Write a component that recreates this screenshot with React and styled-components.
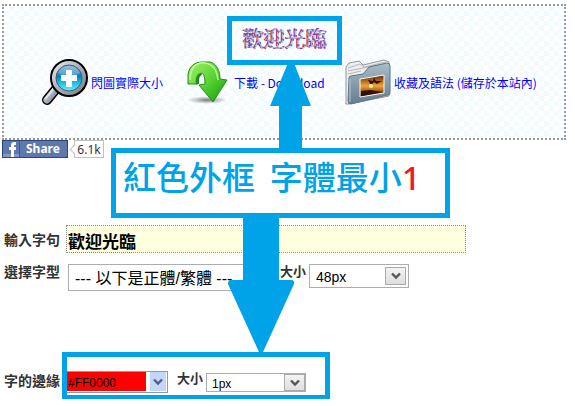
import React from 'react';
import styled, { createGlobalStyle } from 'styled-components';

const BLUE = '#00a2e8';

const GlobalStyle = createGlobalStyle`
  * { box-sizing: border-box; }
  body {
    margin: 0;
    background: #fff;
    color: #333;
    font-family: "Liberation Sans", "Noto Sans CJK TC", sans-serif;
  }
`;

const Page = styled.main`
  position: relative;
  padding: 4px 9px 6px 2px;
`;

const Preview = styled.section`
  display: flex;
  flex-direction: column;
  align-items: center;
  height: 136px;
  padding-top: 14px;
  border: 2px dotted #999;
  background: repeating-conic-gradient(#f2fbff 0 25%, #fff 0 50%) 0 0 / 10px 10px;
`;

const Sample = styled.svg`
  width: 90px;
  height: 32px;
  font: 400 21px "Noto Sans CJK TC", sans-serif;
`;

const Links = styled.nav`
  display: flex;
  align-items: center;
  align-self: stretch;
  margin-top: 6px;
  padding-left: 34px;
`;

const IconLink = styled.a`
  display: flex;
  align-items: center;
  gap: 2px;
  width: ${(p) => p.$width};
  color: #00f;
  font: 12px/18px "Noto Sans CJK TC", sans-serif;
  text-decoration: none;
  white-space: nowrap;
  svg { flex: none; }
`;

const ShareBar = styled.div`
  display: flex;
  gap: 6px;
  height: 18px;
`;

const ShareButton = styled.button`
  display: flex;
  align-items: center;
  width: 66px;
  padding: 0;
  border: 1px solid #29447e;
  background: #5f78ab;
  color: #fff;
  font: 700 12px/16px "Noto Sans", sans-serif;
  svg { flex: none; margin-right: 6px; }
`;

const Count = styled.span`
  position: relative;
  width: 30px;
  border: 1px solid #c1c1c1;
  color: #333;
  font: 12px/17px "Noto Sans", sans-serif;
  text-align: center;
  &::before {
    content: "";
    position: absolute;
    left: -4px;
    top: 5px;
    width: 6px;
    height: 6px;
    border: solid #c1c1c1;
    border-width: 0 0 1px 1px;
    background: linear-gradient(45deg, #fff 50%, transparent 50%);
    transform: rotate(45deg);
  }
`;

const Form = styled.form`
  display: flex;
  flex-direction: column;
  margin-top: 67px;
`;

const Row = styled.div`
  display: flex;
  align-items: flex-start;
  height: ${(p) => p.$height};
  margin-bottom: ${(p) => p.$after || '0'};
`;

const FieldLabel = styled.label`
  flex: none;
  width: 64px;
  padding: ${(p) => p.$top || '0'} 0 0 2px;
  font: 700 14px/14px "Noto Sans CJK TC", sans-serif;
`;

const SizeLabel = styled.label`
  flex: none;
  width: 29px;
  margin-left: ${(p) => p.$before};
  font: 700 13px/14px "Noto Sans CJK TC", sans-serif;
`;

const Phrase = styled.input`
  flex: 0 1 400px;
  min-width: 0;
  height: 28px;
  padding: 3px 1px 1px;
  border: 1px dotted #888;
  background: #ffffe0;
  color: #000;
  font: 700 17px/22px "Noto Sans CJK TC", sans-serif;
`;

const SelectWrap = styled.span`
  display: flex;
  width: ${(p) => p.$width};
  height: ${(p) => p.$height};
  margin-left: ${(p) => p.$before || '0'};
  margin-top: ${(p) => p.$top || '0'};
  padding: ${(p) => p.$inset || '0'};
  border: 1px solid ${(p) => p.$line || '#abadb3'};
  background: #fff;
`;

const Select = styled.select`
  flex: 1;
  min-width: 0;
  appearance: none;
  margin: 0;
  padding: 2px 0 0 ${(p) => p.$indent || '6px'};
  border: 0;
  border-radius: 0;
  background: ${(p) => p.$fill || '#fff'};
  color: #000;
  font-family: "Liberation Sans", "Noto Sans CJK TC", sans-serif;
  font-size: ${(p) => p.$size};
`;

const DropMark = styled.span`
  display: grid;
  place-items: center;
  width: ${(p) => p.$width};
  margin-left: ${(p) => p.$gap || '0'};
  border: 1px solid ${(p) => (p.$xp ? '#c2d3fc' : '#aaa')};
  background: ${(p) => (p.$xp ? '#c5d5fc' : 'linear-gradient(#f3f3f3, #dedede)')};
  color: ${(p) => (p.$xp ? '#4d6185' : '#555')};
`;

const Frame = styled.div`
  position: absolute;
  left: ${(p) => p.$x};
  top: ${(p) => p.$y};
  width: ${(p) => p.$w};
  height: ${(p) => p.$h};
  border: 5px solid ${BLUE};
  pointer-events: none;
`;

const Callout = styled(Frame)`
  padding: 0 7px;
  background: #fff;
  color: ${BLUE};
  font: 500 33px/46px "Noto Sans CJK TC", sans-serif;
  white-space: pre;
`;

const Red = styled.span`
  color: #ed1c24;
  font-family: "Noto Sans", sans-serif;
`;

const Arrow = styled.svg`
  position: absolute;
  left: ${(p) => p.$x};
  top: ${(p) => p.$y};
  fill: ${BLUE};
  pointer-events: none;
`;

const Chevron = () => (
  <svg width="10" height="8" viewBox="0 0 10 8" aria-hidden="true">
    <path d="M1 1.5 5 5.5 9 1.5" fill="none" stroke="currentColor" strokeWidth="2.4" />
  </svg>
);

const ZoomIcon = () => (
  <svg width="51" height="50" viewBox="0 0 51 50" aria-hidden="true">
    <defs>
      <linearGradient id="rim" x2="1" y2="1">
        <stop stopColor="#f0f2f5" /><stop offset=".5" stopColor="#a9afba" /><stop offset="1" stopColor="#707786" />
      </linearGradient>
      <linearGradient id="lens" x2="0" y2="1">
        <stop stopColor="#75acd8" /><stop offset=".45" stopColor="#087dbb" /><stop offset=".6" stopColor="#0caedf" /><stop offset="1" stopColor="#63f3fb" />
      </linearGradient>
    </defs>
    <path d="M18 31 9 42" stroke="#000" strokeWidth="10" strokeLinecap="round" />
    <path d="M19 30 9 42" stroke="url(#rim)" strokeWidth="7" strokeLinecap="round" />
    <path d="M16 30 8 40" stroke="#e5e8ed" strokeWidth="2" strokeLinecap="round" />
    <circle cx="31" cy="20" r="18" fill="url(#rim)" stroke="#000" strokeWidth="2" />
    <circle cx="31" cy="20" r="13" fill="url(#lens)" stroke="#4d5968" />
    <path d="M20 15a12 12 0 0 1 22 0q-10 6-22 0" fill="#fff" opacity=".25" />
    <path d="M28 12h6v5h5v6h-5v6h-6v-6h-5v-6h5z" fill="#fff" />
  </svg>
);

const DownloadIcon = () => (
  <svg width="45" height="50" viewBox="0 0 45 50" aria-hidden="true">
    <defs>
      <linearGradient id="leaf" x2="1" y2="1">
        <stop stopColor="#a6f06c" /><stop offset=".5" stopColor="#59d532" /><stop offset="1" stopColor="#159512" />
      </linearGradient>
      <radialGradient id="shade">
        <stop stopColor="#555" stopOpacity=".8" /><stop offset="1" stopColor="#777" stopOpacity="0" />
      </radialGradient>
    </defs>
    <ellipse cx="20" cy="42" rx="20" ry="4" fill="url(#shade)" />
    <path d="M1 26V17C2 8 8 4 15 4h8c7 2 10 9 10 17l7 1-14 22-14-17 6-1c0-6-1-10-3-11-3 1-5 6-4 11z" fill="url(#leaf)" stroke="#218d18" />
    <path d="M14 15c-4 0-6 5-5 11h3c0-5 0-8 3-9z" fill="#258c1c" />
    <path d="M3 22C3 9 10 4 18 5c7 1 12 7 13 17" fill="none" stroke="#c1fa93" strokeWidth="1.5" />
  </svg>
);

const FolderIcon = () => (
  <svg width="48" height="50" viewBox="0 0 48 50" aria-hidden="true">
    <defs>
      <linearGradient id="folder" x2="0" y2="1">
        <stop stopColor="#a8bdc8" /><stop offset="1" stopColor="#647c8d" />
      </linearGradient>
      <linearGradient id="sunset" x2="0" y2="1">
        <stop stopColor="#5b2508" /><stop offset=".5" stopColor="#f5a332" /><stop offset="1" stopColor="#331004" />
      </linearGradient>
    </defs>
    <path d="M2 9 5 5l10-2 4 4 21-5 5 2v34L5 46H2z" fill="#edeeef" stroke="#92979b" />
    <path d="m4 10 12-4 4 3 22-5M4 13l35-7M4 16l13-3" fill="none" stroke="#b5b8bc" />
    <path d="M5 20q0-2 2-2l12-2 6-7 18-4q3 0 3 3v27q0 2-2 2L7 46q-3 0-3-3z" fill="url(#folder)" stroke="#607583" />
    <path d="m16 21 24-4v18l-24 4z" fill="url(#sunset)" stroke="#f9f9f9" />
    <path d="m24 22 5 1 1-3 2 3 6 0-5 3-3-2-3 3zM17 33l9-1 13 2-22 4z" fill="#321206" />
    <circle cx="27" cy="28" r="2" fill="#fff2a0" />
    <path d="M6 21v23" stroke="#b8cbd4" />
  </svg>
);

export default function App() {
  return (
    <Page>
      <GlobalStyle />
      <Preview>
        <Sample role="img" aria-label="歡迎光臨">
          <text x="3" y="26" fill="#a80f2d">歡迎光臨</text>
          <text x="4" y="26" fill="#b3c8ff">歡迎光臨</text>
          <text x="4" y="26" fill="none" stroke="#75408f" strokeWidth="1" strokeDasharray="2 4">歡迎光臨</text>
        </Sample>
        <Links>
          <IconLink href="#size" $width="149px"><ZoomIcon />閃圖實際大小</IconLink>
          <IconLink href="#download" $width="157px"><DownloadIcon />下載 - Download</IconLink>
          <IconLink href="#save" $width="auto"><FolderIcon />收藏及語法 (儲存於本站內)</IconLink>
        </Links>
      </Preview>

      <ShareBar>
        <ShareButton type="button">
          <svg width="17" height="16" viewBox="0 0 17 16" aria-hidden="true">
            <path d="M0 13h17v3H0z" fill="#8497bf" />
            <path d="M8 16V9H6V6h2V5c0-3 1-4 4-4h1v3h-1q-1 0-1 1v1h2v3h-2v7z" fill="#fff" />
            <path d="M16.5 0v16" stroke="#3b5998" />
          </svg>
          Share
        </ShareButton>
        <Count>6.1k</Count>
      </ShareBar>

      <Form>
        <Row $height="28px" $after="11px">
          <FieldLabel htmlFor="phrase" $top="7px">輸入字句</FieldLabel>
          <Phrase id="phrase" defaultValue="歡迎光臨" />
        </Row>
        <Row $height="28px" $after="79px">
          <FieldLabel htmlFor="typeface">選擇字型</FieldLabel>
          <SelectWrap $width="200px" $height="27px" $before="2px">
            <Select id="typeface" $size="16px">
              <option>--- 以下是正體/繁體 ---</option>
            </Select>
          </SelectWrap>
          <SizeLabel htmlFor="size" $before="12px">大小</SizeLabel>
          <SelectWrap $width="100px" $height="24px" $inset="2px">
            <Select id="size" $size="14px" $indent="4px"><option>48px</option></Select>
            <DropMark $width="21px"><Chevron /></DropMark>
          </SelectWrap>
        </Row>
        <Row $height="22px">
          <FieldLabel htmlFor="edge" $top="2px">字的邊緣</FieldLabel>
          <SelectWrap $width="102px" $height="22px" $line="#7f9db9" $inset="0 1px 1px 0">
            <Select id="edge" $size="12px" $indent="1px" $fill="#f00"><option>#FF0000</option></Select>
            <DropMark $width="16px" $gap="4px" $xp><Chevron /></DropMark>
          </SelectWrap>
          <SizeLabel htmlFor="edge-size" $before="9px">大小</SizeLabel>
          <SelectWrap $width="100px" $height="19px" $top="2px">
            <Select id="edge-size" $size="12px" $indent="5px"><option>1px</option></Select>
            <DropMark $width="21px"><Chevron /></DropMark>
          </SelectWrap>
        </Row>
      </Form>

      <Frame $x="227px" $y="16px" $w="115px" $h="49px" />
      <Arrow $x="270px" $y="60px" width="42" height="90" aria-hidden="true">
        <path d="M18 3q3-3 6 0l17 43H32v44H9V46H0z" />
      </Arrow>
      <Arrow $x="228px" $y="216px" width="67" height="140" aria-hidden="true">
        <path d="M15 0h36v64h12q4 0 3 4L35 136q-2 3-4 0L0 68q0-4 3-4h12z" />
      </Arrow>
      <Callout $x="111px" $y="148px" $w="339px" $h="70px">
        紅色外框{'  '}字體最小<Red>1</Red>
      </Callout>
      <Frame $x="62px" $y="352px" $w="268px" $h="48px" />
    </Page>
  );
}
